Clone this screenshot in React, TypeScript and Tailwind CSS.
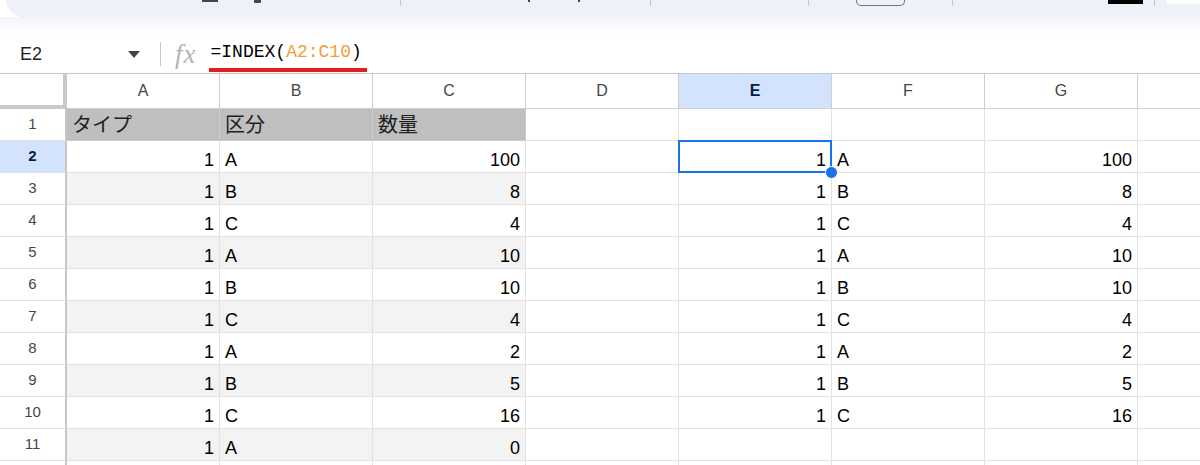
import React from 'react';

const sans = "font-['Liberation_Sans','Noto_Sans_CJK_JP',sans-serif]";

// rows 2..11 of the source range: タイプ / 区分 / 数量
const data: [string, number][] = [
  ['A', 100],
  ['B', 8],
  ['C', 4],
  ['A', 10],
  ['B', 10],
  ['C', 4],
  ['A', 2],
  ['B', 5],
  ['C', 16],
  ['A', 0],
];

const columns = ['A', 'B', 'C', 'D', 'E', 'F', 'G'];

function Sep({ ml }: { ml: string }) {
  return <div className={`${ml} h-[6px] w-px bg-[#c4c7c5]`} />;
}

function Toolbar() {
  // only the lower edge of the toolbar is in view
  return (
    <div className="ml-[6px] flex h-[17px] items-start rounded-bl-[22px] bg-[#eef1f7]">
      <div className="ml-[196px] h-[2px] w-[16px] bg-[#444746]" />
      <div className="ml-[36px] h-[3px] w-[7px] rounded-b-[1px] bg-[#444746]" />
      <Sep ml="ml-[139px]" />
      <div className="ml-[127px] h-[2px] w-[2px] bg-[#444746]" />
      <div className="ml-[48px] h-[2px] w-[2px] bg-[#444746]" />
      <Sep ml="ml-[70px]" />
      <Sep ml="ml-[157px]" />
      <div className="ml-[47px] h-[6px] w-[49px] rounded-b-[5px] border border-t-0 border-[#747775]" />
      <Sep ml="ml-[47px]" />
      <div className="ml-[155px] h-[4px] w-[35px] bg-black" />
      <Sep ml="ml-[11px]" />
      <div className="ml-[12px] h-[4px] flex-1 bg-white" />
    </div>
  );
}

function FormulaBar() {
  return (
    <div className={`flex h-[38px] items-center ${sans}`}>
      <div className="flex w-[150px] items-center pl-[20px]">
        <span className="text-[18px] leading-[22px] text-[#1f1f1f]">E2</span>
        <svg className="ml-auto mr-[10px]" width="12" height="7" viewBox="0 0 12 7">
          <path d="M0 0h12L6 7z" fill="#444746" />
        </svg>
      </div>
      <div className="ml-[10px] h-[24px] w-px bg-[#c4c7c5]" />
      <span className="ml-[14px] font-['Liberation_Serif',serif] text-[27px] italic leading-[22px] tracking-[1px] text-[#b4b4b4]">
        fx
      </span>
      <div className="ml-[14px] flex flex-col self-end pb-[1px]">
        <span className="font-['Liberation_Mono',monospace] text-[18px] leading-[22px] text-black">
          =INDEX(<span className="text-[#f29d38]">A2:C10</span>)
        </span>
        <div className="-ml-[2px] mt-[5px] h-[4px] w-[158px] bg-[#e21e1e]" />
      </div>
    </div>
  );
}

function HeaderRow() {
  return (
    <div className={`flex border-t border-[#c4c7c5] ${sans}`}>
      <div className="h-[35px] w-[67px] shrink-0 border-r-4 border-b-4 border-[#c9c9c9] bg-white" />
      {columns.map((c) => (
        <div
          key={c}
          className={`flex h-[35px] w-[153px] shrink-0 items-center justify-center border-r border-b border-[#cfcfcf] text-[16px] ${
            c === 'E' ? 'bg-[#d3e3fd] font-bold text-[#041e49]' : 'bg-white text-[#444746]'
          }`}
        >
          {c}
        </div>
      ))}
      <div className="h-[35px] flex-1 border-b border-[#cfcfcf] bg-white" />
    </div>
  );
}

type CellProps = {
  value?: string | number;
  align?: 'left' | 'right';
  bg?: string;
  border?: string;
  big?: boolean;
  children?: React.ReactNode;
};

function Cell({ value, align = 'left', bg = 'bg-white', border = 'border-[#e2e2e2]', big, children }: CellProps) {
  return (
    <div
      className={`relative flex h-[32px] w-[153px] shrink-0 items-end border-r border-b ${border} ${bg} pb-[2px] ${
        align === 'right' ? 'justify-end pr-[5px]' : 'pl-[5px]'
      } ${big ? 'text-[20px] leading-[26px] text-[#1f1f1f]' : 'text-[18px] leading-[20px] text-black'}`}
    >
      {value}
      {children}
    </div>
  );
}

function RowHead({ n, active }: { n?: number; active?: boolean }) {
  return (
    <div
      className={`flex h-[32px] w-[67px] shrink-0 items-center justify-center border-r-2 border-b border-r-[#c4c7c5] border-b-[#e2e2e2] text-[15px] ${
        active ? 'bg-[#d3e3fd] font-bold text-[#041e49]' : 'bg-white text-[#444746]'
      }`}
    >
      {n}
    </div>
  );
}

function Selection() {
  return (
    <>
      <div className="absolute -top-px -left-px -right-px -bottom-px z-10 border-2 border-[#1a73e8]" />
      <div className="absolute -right-[7px] -bottom-[7px] z-20 h-[13px] w-[13px] rounded-full border border-white bg-[#1a73e8]" />
    </>
  );
}

export default function App() {
  return (
    <div className={`h-[465px] w-[1200px] overflow-hidden bg-white ${sans}`}>
      <Toolbar />
      <div className="h-[18px] bg-gradient-to-b from-[#f3f5f9] to-white" />
      <FormulaBar />
      <HeaderRow />

      {/* row 1: table heading */}
      <div className="flex">
        <RowHead n={1} />
        <Cell value="タイプ" bg="bg-[#bfbfbf]" border="border-[#cbcbcb]" big />
        <Cell value="区分" bg="bg-[#bfbfbf]" border="border-[#cbcbcb]" big />
        <Cell value="数量" bg="bg-[#bfbfbf]" border="border-[#cbcbcb]" big />
        <Cell />
        <Cell />
        <Cell />
        <Cell />
        <div className="h-[32px] flex-1 border-b border-[#e2e2e2]" />
      </div>

      {data.map(([kind, qty], i) => {
        const shade = i % 2 === 1 ? 'bg-[#f3f3f3]' : 'bg-white';
        const copied = i < 9;
        return (
          <div key={i} className="flex">
            <RowHead n={i + 2} active={i === 0} />
            <Cell value={1} align="right" bg={shade} />
            <Cell value={kind} bg={shade} />
            <Cell value={qty} align="right" bg={shade} />
            <Cell />
            <Cell value={copied ? 1 : undefined} align="right">
              {i === 0 && <Selection />}
            </Cell>
            <Cell value={copied ? kind : undefined} />
            <Cell value={copied ? qty : undefined} align="right" />
            <div className="h-[32px] flex-1 border-b border-[#e2e2e2]" />
          </div>
        );
      })}

      {/* next row, only its top edge shows */}
      <div className="flex">
        <RowHead />
        {columns.map((c) => (
          <Cell key={c} />
        ))}
      </div>
    </div>
  );
}
